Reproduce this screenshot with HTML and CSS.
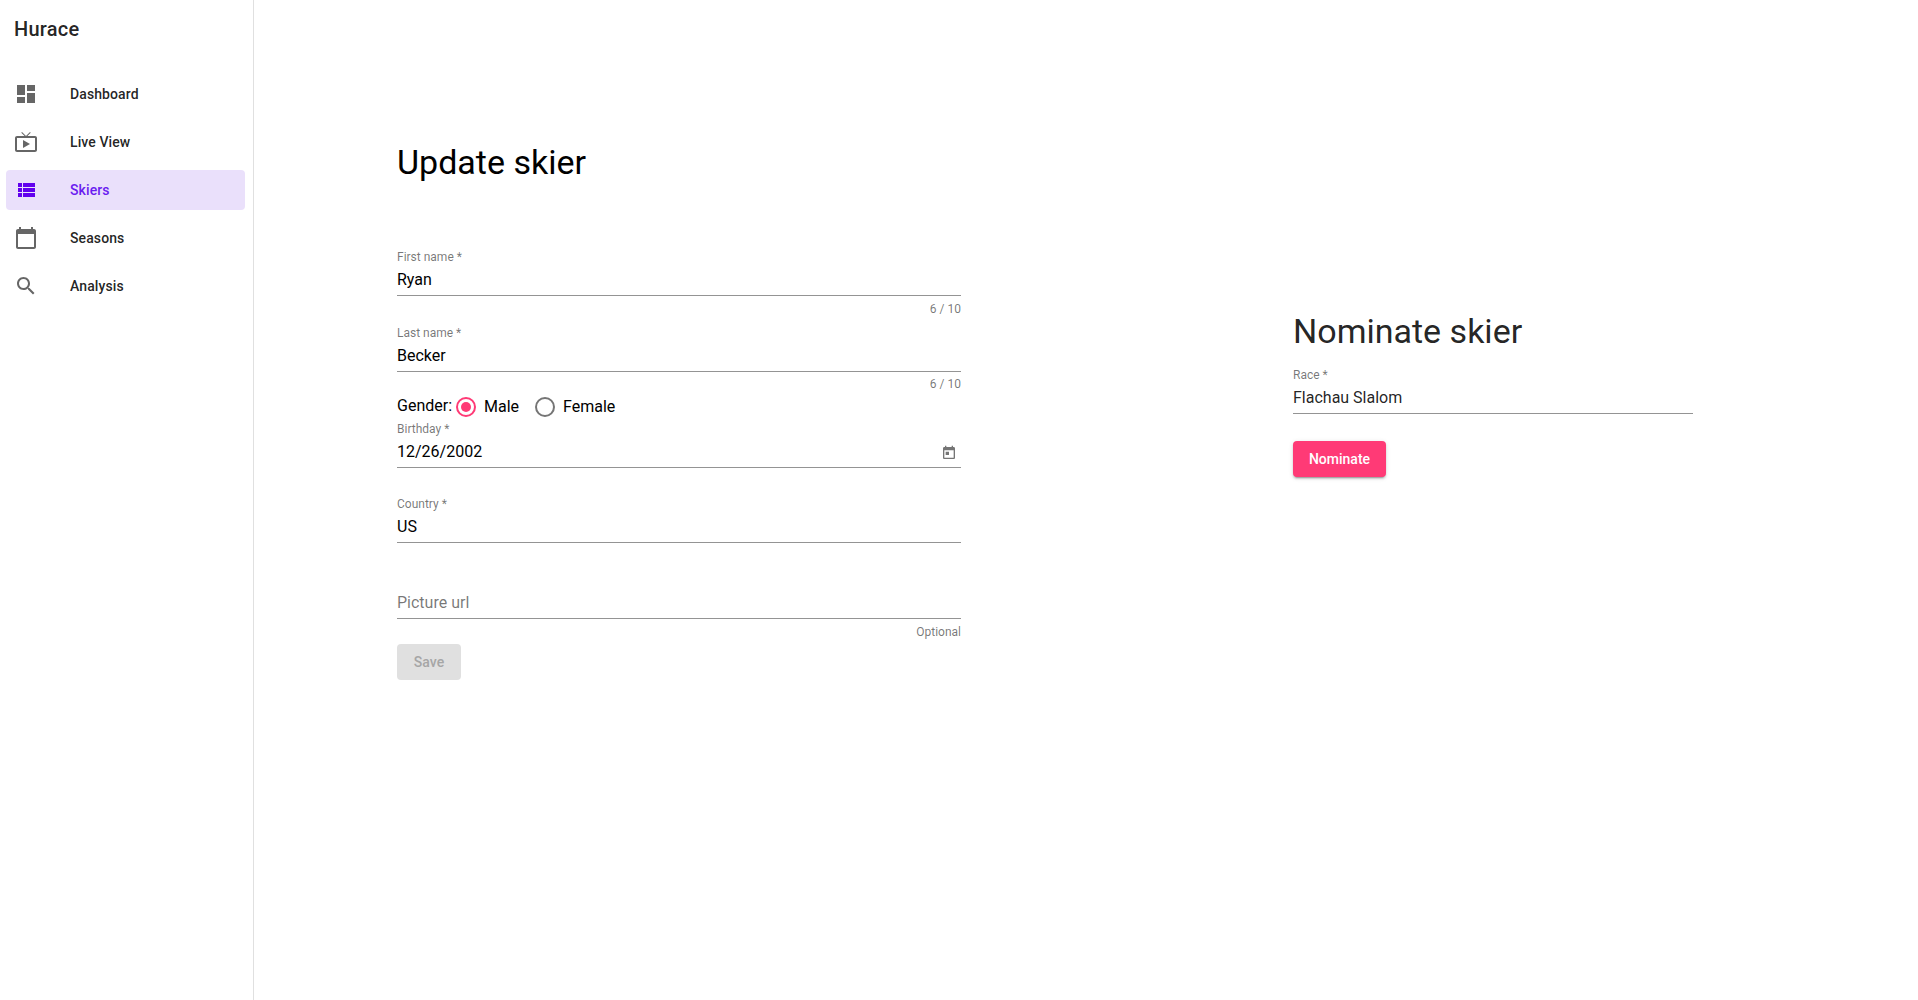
FILE: index.html
```html
<!DOCTYPE html>
<html lang="en">
<head>
<meta charset="utf-8">
<title>Hurace</title>
<link rel="stylesheet" href="styles.css">
</head>
<body>
<div class="app">
  <aside class="drawer">
    <div class="brand">Hurace</div>
    <nav class="nav">
      <a class="nav-item"><svg class="icon" viewBox="0 0 24 24"><path d="M3 13h8V3H3v10zm0 8h8v-6H3v6zm10 0h8V11h-8v10zm0-18v6h8V3h-8z"/></svg>Dashboard</a>
      <a class="nav-item"><svg class="icon" viewBox="0 0 24 24"><path d="M21 6h-7.59l3.29-3.29L16 2l-4 4-4-4-.71.71L10.59 6H3c-1.1 0-2 .89-2 2v12c0 1.1.9 2 2 2h18c1.1 0 2-.9 2-2V8c0-1.11-.9-2-2-2zm0 14H3V8h18v12zM9 10v8l7-4z"/></svg>Live View</a>
      <a class="nav-item active"><svg class="icon" viewBox="0 0 24 24"><path d="M4 14h4v-4H4v4zm0 5h4v-4H4v4zM4 9h4V5H4v4zm5 5h12v-4H9v4zm0 5h12v-4H9v4zM9 5v4h12V5H9z"/></svg>Skiers</a>
      <a class="nav-item"><svg class="icon" viewBox="0 0 24 24"><path d="M20 3h-1V1h-2v2H7V1H5v2H4c-1.1 0-2 .9-2 2v16c0 1.1.9 2 2 2h16c1.1 0 2-.9 2-2V5c0-1.1-.9-2-2-2zm0 18H4V8h16v13z"/></svg>Seasons</a>
      <a class="nav-item"><svg class="icon" viewBox="0 0 24 24"><path d="M15.5 14h-.79l-.28-.27C15.41 12.59 16 11.11 16 9.5 16 5.91 13.09 3 9.5 3S3 5.91 3 9.5 5.91 16 9.5 16c1.61 0 3.09-.59 4.23-1.57l.27.28v.79l5 4.99L20.49 19l-4.99-5zm-6 0C7.01 14 5 11.99 5 9.5S7.01 5 9.5 5 14 7.01 14 9.5 11.99 14 9.5 14z"/></svg>Analysis</a>
    </nav>
  </aside>
  <main class="content">
    <section class="update">
      <h1 class="title">Update skier</h1>
      <div class="field">
        <div class="label">First name *</div>
        <div class="value">Ryan</div>
      </div>
      <div class="hint">6 / 10</div>
      <div class="field last-name">
        <div class="label">Last name *</div>
        <div class="value">Becker</div>
      </div>
      <div class="hint">6 / 10</div>
      <div class="gender">
        <span class="gender-label">Gender:</span>
        <span class="radio checked"></span><span class="option">Male</span>
        <span class="radio"></span><span class="option">Female</span>
      </div>
      <div class="field">
        <div class="label">Birthday *</div>
        <div class="value date">12/26/2002<svg class="calendar" viewBox="0 0 24 24"><path d="M19 3h-1V1h-2v2H8V1H6v2H5c-1.11 0-1.99.9-1.99 2L3 19c0 1.1.89 2 2 2h14c1.1 0 2-.9 2-2V5c0-1.1-.9-2-2-2zm0 16H5V8h14v11zM7 10h5v5H7z"/></svg></div>
      </div>
      <div class="field country">
        <div class="label">Country *</div>
        <div class="value">US</div>
      </div>
      <div class="field picture">
        <div class="value empty">Picture url</div>
      </div>
      <div class="hint">Optional</div>
      <button class="button save" disabled>Save</button>
    </section>
    <section class="nominate">
      <h2 class="title nominate-title">Nominate skier</h2>
      <div class="field">
        <div class="label">Race *</div>
        <div class="value">Flachau Slalom</div>
      </div>
      <button class="button primary">Nominate</button>
    </section>
  </main>
</div>
</body>
</html>
```
FILE: styles.css
```css
* { box-sizing: border-box; }
body { margin: 0; background: #fff; color: #000; font-family: Roboto, "Liberation Sans", sans-serif; }
.app { display: flex; height: 1000px; }

.drawer { width: 254px; flex: none; border-right: 1px solid #e0e0e0; }
.brand { height: 66px; padding: 13px 14px 0; font-size: 20px; line-height: 32px; font-weight: 500; letter-spacing: .25px; color: rgba(0,0,0,.87); }
.nav { display: flex; flex-direction: column; gap: 8px; padding: 8px 8px 0 6px; }
.nav-item { display: flex; align-items: center; gap: 32px; height: 40px; padding: 0 8px; border-radius: 4px; font-size: 14px; font-weight: 500; letter-spacing: .1px; color: rgba(0,0,0,.87); }
.icon { width: 24px; height: 24px; fill: #666; }
.active { background: #eae0fb; color: #6a1cf0; }
.active .icon { fill: #6200ee; }

.content { flex: 1; display: flex; align-items: flex-start; padding-left: 143px; }
.update { width: 564px; padding-top: 142px; }
.nominate { width: 400px; margin-left: 332px; padding-top: 311px; color: rgba(0,0,0,.87); }
.title { margin: 0 0 68px; font-size: 34px; line-height: 40px; font-weight: 400; }
.nominate-title { margin-bottom: 17px; }

.field { border-bottom: 1px solid #949494; padding-bottom: 6px; }
.label { margin-bottom: 7px; font-size: 12px; line-height: 14px; color: rgba(0,0,0,.54); }
.value { font-size: 16px; line-height: 18px; }
.hint { margin-top: 6px; font-size: 12px; line-height: 14px; text-align: right; color: rgba(0,0,0,.54); }
.last-name { margin-top: 10px; }
.last-name + .hint { margin-top: 5px; }
.country { margin-top: 29px; }
.picture { margin-top: 51px; }
.empty { color: rgba(0,0,0,.54); }
.date { display: flex; justify-content: space-between; }
.calendar { width: 16px; height: 16px; margin: 2px 4px 0 0; fill: #757575; }

.gender { display: flex; align-items: flex-start; height: 31px; padding-top: 6px; font-size: 16px; line-height: 20px; }
.gender-label { width: 59px; margin-top: -1px; }
.radio { display: flex; align-items: center; justify-content: center; width: 20px; height: 20px; margin-right: 8px; border: 2px solid #757575; border-radius: 50%; }
.option { margin-right: 16px; }
.checked { border-color: #ff3a76; }
.checked::after { content: ""; width: 10px; height: 10px; border-radius: 50%; background: #ff3a76; }

.button { display: block; height: 36px; padding: 0; border: 0; border-radius: 4px; font: 500 14px/36px Roboto, "Liberation Sans", sans-serif; }
.save { width: 64px; margin-top: 5px; background: #e0e0e0; color: #a6a6a6; }
.primary { width: 93px; margin-top: 27px; background: #ff3a76; color: #fff; box-shadow: 0 3px 1px -2px rgba(0,0,0,.2), 0 2px 2px rgba(0,0,0,.14), 0 1px 5px rgba(0,0,0,.12); }
```
